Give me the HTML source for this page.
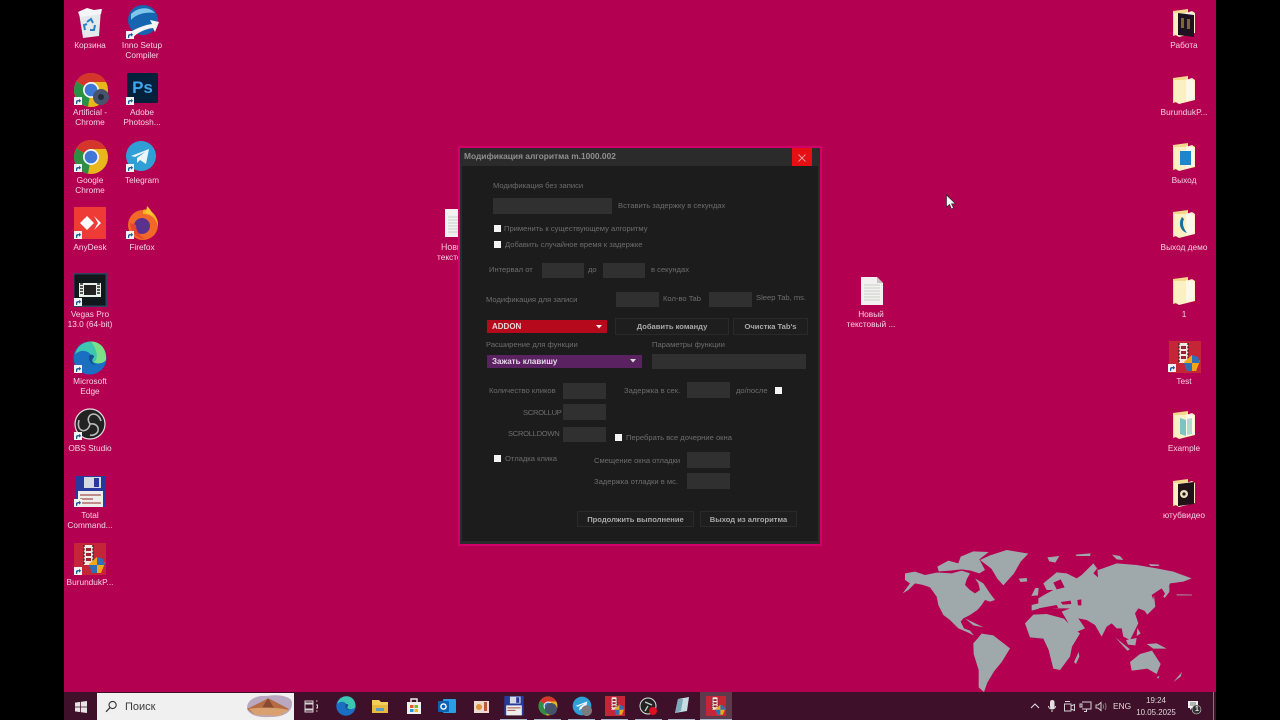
<!DOCTYPE html>
<html lang="ru"><head><meta charset="utf-8"><title>Desktop</title>
<style>
html,body{margin:0;padding:0;width:1280px;height:720px;overflow:hidden;background:#000}
#st{position:absolute;left:0;top:0;width:1280px;height:720px;overflow:hidden;background:#000;font-family:"Liberation Sans","DejaVu Sans",sans-serif;filter:blur(.3px)}
#dk{position:absolute;left:64px;top:0;width:1152px;height:692px;background:#b30050}
.l{position:absolute;width:70px;text-align:center;font-size:8.3px;line-height:10px;color:#f6d3e3;white-space:nowrap}
.i{position:absolute;width:36px;height:36px;overflow:visible}
.a{position:absolute}
.t{position:absolute;font-size:7.6px;line-height:10px;color:#6d6d6d;white-space:nowrap}
.n{position:absolute;background:#303030}
.c{position:absolute;width:7px;height:7px;background:#f4f4f4}
.b{position:absolute;background:#1e1e1e;border:1px solid #2a2a2a;box-sizing:border-box;color:#a9a9a9;font-size:7.6px;font-weight:bold;text-align:center;line-height:15px;white-space:nowrap}
.u{position:absolute;top:718.5px;height:1.5px;background:#a9b8c8}
.ti{position:absolute;top:696px;width:20px;height:20px;overflow:visible}
</style></head><body><div id="st">
<svg width="0" height="0" style="position:absolute"><defs>
<symbol id="s" viewBox="0 0 8 8"><rect width="8" height="8" fill="#f2f2f2"/><path d="M2 7V4.6C2 3.6 3 3 4.4 3H5V1.8L7.2 3.8 5 5.6V4.4H4.4C3.6 4.4 3.2 5 3.2 7Z" fill="#1d5d9a"/></symbol>
<symbol id="ch" viewBox="0 0 36 36"><circle cx="18" cy="18" r="17" fill="#e8b71b"/><path d="M18 18 3.3 9.5A17 17 0 0 1 33 10H18Z" fill="#d5362c"/><path d="M18 18 3.3 9.5A17 17 0 0 0 15 34.7Z" fill="#2c8f45"/><circle cx="18" cy="18" r="8" fill="#f5f5f5"/><circle cx="18" cy="18" r="6.3" fill="#3e77d6"/></symbol>
<symbol id="fo" viewBox="0 0 24 30"><path d="M1 3 16 1V24L1 28Z" fill="#f2d98c"/><path d="M2 5H14L20 3 23 5V25L7 29 2 26Z" fill="#fbf0c4"/><path d="M14 4 22 6V24L14 26Z" fill="#fbf8ea"/></symbol>
<symbol id="bu" viewBox="0 0 32 32"><rect width="32" height="32" fill="#c42638"/><path d="M10 2H19V22H10Z" fill="#f3e7e0"/><path d="M12 5H17V8H12ZM12 10H17V13H12ZM12 15H17V18H12Z" fill="#9a2333"/><path d="M10 2V22M19 2V22" stroke="#40202a" stroke-width="1.4" stroke-dasharray="2 1.4"/><path d="M23 14 31 20 27 30H18L15 21Z" fill="#f0a818"/><path d="M23 14V22H15L18 30H23V22H31L29 16Z" fill="#2e6fb8"/></symbol>
<symbol id="txt" viewBox="0 0 24 30"><path d="M1 1H17L23 7V29H1Z" fill="#f2f0f0"/><path d="M4 9H20M4 12H20M4 15H20M4 18H20M4 21H20M4 24H20" stroke="#c9d0c9" stroke-width="1"/><path d="M17 1V7H23Z" fill="#c9c4c4"/></symbol>
</defs></svg>
<div id="dk"></div>

<svg class="a" style="left:890px;top:540px" width="320" height="152" viewBox="0 0 960 456"><g fill="#9fa9ac">
<path d="M45 100 75 95 105 105 140 98 150 98 185 100 215 92 240 100 230 118 225 135 240 150 255 160 270 150 265 130 255 115 280 130 300 160 315 180 300 185 285 180 275 195 262 210 240 225 220 235 212 245 222 265 240 272 252 287 235 278 205 265 180 240 160 225 145 195 140 170 120 142 100 135 75 130 55 150 38 160 60 130 45 120Z"/>
<path d="M142 80 175 62 205 70 212 50 250 34 296 36 268 58 285 90 268 100 242 92 215 88 180 92 146 94Z"/>
<path d="M270 60 300 46 350 30 415 41 392 65 372 100 340 136 322 116 304 86Z"/>
<path d="M250 310 275 281 310 286 360 325 336 365 312 394 292 428 282 456 266 442 266 390 251 342Z"/>
<path d="M405 250 430 224 470 222 522 236 546 262 570 280 546 320 540 350 510 390 490 386 476 330 460 296 420 292Z"/>
<path d="M425 195 445 190 445 175 462 165 490 150 470 150 460 130 500 97 530 100 560 115 575 105 610 70 625 90 680 70 740 75 800 85 850 95 905 115 880 125 840 130 828 165 815 145 800 155 785 165 795 195 770 215 745 205 735 220 745 250 735 270 720 300 700 290 695 265 680 265 665 250 650 260 635 290 615 255 590 240 565 235 585 265 550 280 530 240 515 215 540 205 480 205 470 205 450 205 425 212Z"/>
<path d="M720 366 750 342 786 332 812 372 800 402 772 386 725 392Z"/>
<path d="M552 366 566 336 568 350 558 372Z"/>
<path d="M386 116 410 114 412 124 392 126Z"/><path d="M472 52 508 48 496 68 478 64Z"/><path d="M556 44 602 40 600 48 560 48Z"/><path d="M666 44 690 48 700 60 680 58Z"/><path d="M776 72 808 74 806 78 782 78Z"/>
<path d="M436 144 446 144 444 166 424 168Z"/><path d="M820 170 838 138 838 156 824 174Z"/><path d="M762 210 786 196 792 166 796 200 772 224Z"/>
<path d="M676 292 720 328 712 332Z"/><path d="M708 300 740 294 736 316 714 314Z"/><path d="M770 312 800 310 830 326 790 326Z"/><path d="M742 264 752 280 740 288Z"/><path d="M850 426 876 396 872 410Z"/><path d="M800 412 808 408 806 416Z"/>
<path d="M225 235 256 250 280 262 250 256Z"/><path d="M860 163 906 164 906 166 860 166Z"/></g>
<g fill="#b30050"><path d="M512 186 542 182 544 192 518 194Z"/><path d="M490 128 512 118 524 142 500 148Z"/><path d="M562 180 574 178 574 196 564 196Z"/><path d="M610 100 622 84 624 112Z"/><path d="M445 205 500 195 505 204 450 208Z"/></g></svg>

<!-- left icons -->
<svg class="i" style="left:72px;top:5px" viewBox="0 0 36 36"><path d="M7 8 29 4 27 31 11 33Z" fill="#e4e9ec"/><path d="M6 7 15 3 22 5 30 4 29 9 8 12Z" fill="#f6f6f6"/><path d="M15 17 19 14 21 18M23 20 22 25 18 25M13 25 12 20 15 19" stroke="#2a80c4" stroke-width="2" fill="none"/></svg>
<div class="l" style="left:55px;top:40px">Корзина</div>
<svg class="i" style="left:124px;top:5px" viewBox="0 0 36 36"><circle cx="19" cy="15" r="15" fill="#1565b0"/><path d="M7 9C14 2 25 1 31 8 24 7 13 8 7 15Z" fill="#7fc6ea"/><path d="M2 30C10 24 20 20 28 19L26 15 35 17 31 27 29 23C20 24 11 29 8 34Z" fill="#f5f5f5"/></svg>
<svg class="a" style="left:126px;top:31px" width="8" height="8"><use href="#s"/></svg>
<div class="l" style="left:107px;top:40px">Inno Setup<br>Compiler</div>

<svg class="i" style="left:73px;top:72px"><use href="#ch"/></svg><svg class="a" style="left:92px;top:88px" width="18" height="18" viewBox="0 0 18 18"><circle cx="9" cy="9" r="8" fill="#46536a"/><circle cx="9" cy="9" r="3" fill="#222b3d"/></svg>
<svg class="a" style="left:74px;top:97px" width="8" height="8"><use href="#s"/></svg>
<div class="l" style="left:55px;top:107px">Artificial -<br>Chrome</div>
<div class="a" style="left:127px;top:73px;width:31px;height:30px;background:#04203a;border-radius:2px;color:#3fa6f0;font:bold 17px/30px 'Liberation Sans',sans-serif;text-align:center">Ps</div>
<svg class="a" style="left:126px;top:97px" width="8" height="8"><use href="#s"/></svg>
<div class="l" style="left:107px;top:107px">Adobe<br>Photosh...</div>

<svg class="i" style="left:73px;top:139px"><use href="#ch"/></svg>
<svg class="a" style="left:74px;top:164px" width="8" height="8"><use href="#s"/></svg>
<div class="l" style="left:55px;top:175px">Google<br>Chrome</div>
<svg class="i" style="left:126px;top:141px;width:30px;height:30px" viewBox="0 0 30 30"><circle cx="15" cy="15" r="15" fill="#2f9fd6"/><path d="M5 15 23 8 20 23 14 19 11 22 11 17 19 11 9 16Z" fill="#eef5f9"/></svg>
<svg class="a" style="left:126px;top:164px" width="8" height="8"><use href="#s"/></svg>
<div class="l" style="left:107px;top:175px">Telegram</div>

<svg class="a" style="left:74px;top:207px" width="32" height="32" viewBox="0 0 32 32"><rect width="32" height="32" fill="#ef3b36"/><path d="M13 9 20 16 13 23 6 16ZM20 9 27 16 20 23 24 16Z" fill="#fff"/></svg>
<svg class="a" style="left:74px;top:231px" width="8" height="8"><use href="#s"/></svg>
<div class="l" style="left:55px;top:242px">AnyDesk</div>
<svg class="a" style="left:127px;top:206px" width="32" height="34" viewBox="0 0 32 34"><circle cx="16" cy="19" r="15" fill="#f2682a"/><path d="M16 4C24 1 32 12 31 20 28 10 22 8 16 8Z" fill="#f6b025"/><path d="M20 0C24 4 25 6 26 10L19 7Z" fill="#fbc531"/><circle cx="15" cy="20" r="8" fill="#5b3190"/><path d="M3 17C4 26 10 33 18 33 12 29 9 25 9 19Z" fill="#e8452f"/></svg>
<svg class="a" style="left:126px;top:231px" width="8" height="8"><use href="#s"/></svg>
<div class="l" style="left:107px;top:242px">Firefox</div>

<svg class="a" style="left:73px;top:273px" width="34" height="34" viewBox="0 0 34 34"><rect width="34" height="34" fill="#2f4262"/><rect x="1.5" y="1.5" width="31" height="31" fill="#11181c"/><path d="M6 10H28V24H6Z" fill="#e8eee8"/><path d="M11 12H23V22H11Z" fill="#222"/><path d="M7 11H10M7 14H10M7 17H10M7 20H10M24 11H27M24 14H27M24 17H27M24 20H27" stroke="#222" stroke-width="1.4"/></svg>
<svg class="a" style="left:74px;top:298px" width="8" height="8"><use href="#s"/></svg>
<div class="l" style="left:55px;top:309px">Vegas Pro<br>13.0 (64-bit)</div>
<svg class="a" style="left:73px;top:341px" width="34" height="34" viewBox="0 0 34 34"><circle cx="17" cy="17" r="16.5" fill="#1b6fc2"/><path d="M2 14C4 4 12 .5 18 .5 28 .5 34 9 33 19 30 23 20 24 18 19 20 12 13 9 8 10 5 11 3 12 2 14Z" fill="#3dc7b0"/><path d="M18 .5C28 .5 34 9 33 19 30 23 24 23 21 21 26 18 24 8 18 .5Z" fill="#7be087"/><path d="M16 15C17 13 21 13 21 16 18 19 19 22 23 24 19 24 15 20 16 15Z" fill="#14508f"/></svg>
<svg class="a" style="left:74px;top:365px" width="8" height="8"><use href="#s"/></svg>
<div class="l" style="left:55px;top:376px">Microsoft<br>Edge</div>
<svg class="a" style="left:74px;top:408px" width="32" height="32" viewBox="0 0 32 32"><circle cx="16" cy="16" r="15" fill="#222" stroke="#e8e0e4" stroke-width="1.2"/><path d="M16 16C13 12 14 7 19 6 23 6 26 9 27 13M16 16C21 15 25 18 24 23 23 26 19 28 16 27M16 16C15 21 11 24 7 22 4 20 4 16 5 12" fill="none" stroke="#b9b9b9" stroke-width="1.6"/></svg>
<svg class="a" style="left:74px;top:432px" width="8" height="8"><use href="#s"/></svg>
<div class="l" style="left:55px;top:443px">OBS Studio</div>
<svg class="a" style="left:75px;top:476px" width="31" height="32" viewBox="0 0 31 32"><path d="M0 0H31V31H0Z" fill="#28399e"/><rect x="9" y="1" width="17" height="11" fill="#d5dae0"/><rect x="19" y="2" width="5" height="9" fill="#28399e"/><rect x="3" y="15" width="25" height="16" fill="#f0eeea"/><path d="M5 19H26M5 23H18M5 27H26" stroke="#a25252" stroke-width="1.2"/></svg>
<svg class="a" style="left:74px;top:499px" width="8" height="8"><use href="#s"/></svg>
<div class="l" style="left:55px;top:510px">Total<br>Command...</div>
<svg class="a" style="left:74px;top:543px" width="32" height="32"><use href="#bu"/></svg>
<svg class="a" style="left:74px;top:567px" width="8" height="8"><use href="#s"/></svg>
<div class="l" style="left:55px;top:577px">BurundukP...</div>

<!-- right icons -->
<svg class="a" style="left:1172px;top:8px" width="24" height="30" viewBox="0 0 24 30"><use href="#fo"/><path d="M6 5 22 7V29L6 27Z" fill="#1f1220"/><path d="M9 10H12V20H9ZM15 11H18V21H15Z" fill="#7b6a30"/></svg>
<div class="l" style="left:1149px;top:40px">Работа</div>
<svg class="a" style="left:1172px;top:75px" width="24" height="30"><use href="#fo"/></svg>
<div class="l" style="left:1149px;top:107px">BurundukP...</div>
<svg class="a" style="left:1172px;top:142px" width="24" height="30" viewBox="0 0 24 30"><use href="#fo"/><path d="M8 9H19V23H8Z" fill="#1f86cc"/></svg>
<div class="l" style="left:1149px;top:175px">Выход</div>
<svg class="a" style="left:1172px;top:209px" width="24" height="30" viewBox="0 0 24 30"><use href="#fo"/><path d="M10 8C6 14 8 22 15 24 11 19 10 14 12 10Z" fill="#1a6f9e"/></svg>
<div class="l" style="left:1149px;top:242px">Выход демо</div>
<svg class="a" style="left:1172px;top:276px" width="24" height="30"><use href="#fo"/></svg>
<div class="l" style="left:1149px;top:309px">1</div>
<svg class="a" style="left:1169px;top:341px" width="32" height="32"><use href="#bu"/></svg>
<svg class="a" style="left:1168px;top:364px" width="8" height="8"><use href="#s"/></svg>
<div class="l" style="left:1149px;top:376px">Test</div>
<svg class="a" style="left:1172px;top:410px" width="24" height="30" viewBox="0 0 24 30"><use href="#fo"/><path d="M8 8 14 10V26L8 24Z" fill="#7cc4c4"/><path d="M15 9 20 8V24L15 25Z" fill="#b6d8cf"/></svg>
<div class="l" style="left:1149px;top:443px">Example</div>
<svg class="a" style="left:1172px;top:478px" width="24" height="30" viewBox="0 0 24 30"><use href="#fo"/><path d="M6 6 22 4V26L6 28Z" fill="#201218"/><circle cx="12" cy="16" r="4" fill="#e8e0c0"/><circle cx="12" cy="16" r="1.6" fill="#201218"/></svg>
<div class="l" style="left:1149px;top:510px">ютубвидео</div>

<!-- middle icons -->
<svg class="a" style="left:444px;top:208px" width="24" height="30"><use href="#txt"/></svg>
<div class="a" style="left:441px;top:242px;font-size:8.8px;line-height:10px;color:#f6c4da">Новый</div>
<div class="a" style="left:437px;top:252px;font-size:8.3px;line-height:10px;color:#f6d3e3;white-space:nowrap">текстовый ...</div>
<svg class="a" style="left:860px;top:276px" width="24" height="30"><use href="#txt"/></svg>
<div class="l" style="left:836px;top:309px">Новый<br>текстовый ...</div>

<!-- cursor -->
<svg class="a" style="left:945px;top:194px" width="12" height="16" viewBox="0 0 12 16"><path d="M1.5 1V13L4.5 10.5 6.5 15 8.5 14 6.5 9.8H10.5Z" fill="#f6f6f6" stroke="#222" stroke-width=".6"/></svg>

<!-- dialog -->
<div class="a" style="left:458px;top:146px;width:364px;height:400px;background:#d4006a"></div>
<div class="a" style="left:460px;top:148px;width:360px;height:396px;background:#2b2b2b"></div>
<div class="a" style="left:462px;top:166px;width:356px;height:375px;background:#1c1c1c"></div>
<div class="t" style="left:464px;top:150.5px;color:#8f8f8f;font-weight:bold;font-size:8.4px">Модификация алгоритма m.1000.002</div>
<div class="a" style="left:792px;top:148px;width:20px;height:18px;background:#e60f14"></div>
<svg class="a" style="left:798px;top:154px" width="8" height="8"><path d="M.5.5 7.5 7.5M7.5.5.5 7.5" stroke="#f0a0a0" stroke-width=".9"/></svg>

<div class="t" style="left:493px;top:181px">Модификация без записи</div>
<div class="n" style="left:493px;top:198px;width:119px;height:16px"></div>
<div class="t" style="left:618px;top:201px">Вставить задержку в секундах</div>
<div class="c" style="left:494px;top:225px"></div>
<div class="t" style="left:504px;top:224px">Применить к существующему алгоритму</div>
<div class="c" style="left:494px;top:241px"></div>
<div class="t" style="left:505px;top:239.5px">Добавить случайное время к задержке</div>
<div class="t" style="left:489px;top:265px">Интервал от</div>
<div class="n" style="left:542px;top:263px;width:42px;height:15px"></div>
<div class="t" style="left:588px;top:265px">до</div>
<div class="n" style="left:603px;top:263px;width:42px;height:15px"></div>
<div class="t" style="left:651px;top:265px">в секундах</div>
<div class="t" style="left:486px;top:295px">Модификация для записи</div>
<div class="n" style="left:616px;top:292px;width:43px;height:15px"></div>
<div class="t" style="left:663px;top:294px">Кол-во Tab</div>
<div class="n" style="left:709px;top:292px;width:43px;height:15px"></div>
<div class="t" style="left:756px;top:293px">Sleep Tab, ms.</div>

<div class="a" style="left:487px;top:320px;width:120px;height:13px;background:#b60a1c;color:#e8d4d4;font:bold 8px/13px 'Liberation Sans',sans-serif;text-indent:5px">ADDON</div>
<svg class="a" style="left:596px;top:325px" width="6" height="4"><path d="M0 0H6L3 3.5Z" fill="#eee"/></svg>
<div class="b" style="left:615px;top:318px;width:114px;height:17px">Добавить команду</div>
<div class="b" style="left:733px;top:318px;width:75px;height:17px">Очистка Tab's</div>

<div class="t" style="left:486px;top:339.5px">Расширение для функции</div>
<div class="t" style="left:652px;top:339.5px">Параметры функции</div>
<div class="a" style="left:487px;top:355px;width:155px;height:13px;background:#5a2260;color:#e4dbe6;font:bold 8px/13px 'Liberation Sans',sans-serif;text-indent:5px">Зажать клавишу</div>
<svg class="a" style="left:630px;top:359px" width="6" height="4"><path d="M0 0H6L3 3.5Z" fill="#ddd"/></svg>
<div class="n" style="left:652px;top:354px;width:154px;height:15px"></div>

<div class="t" style="left:489px;top:385.5px">Количество кликов</div>
<div class="n" style="left:563px;top:383px;width:43px;height:16px"></div>
<div class="t" style="left:624px;top:385.5px">Задержка в сек.</div>
<div class="n" style="left:687px;top:382px;width:43px;height:16px"></div>
<div class="t" style="left:736px;top:385.5px">до/после</div>
<div class="c" style="left:775px;top:387px"></div>
<div class="t" style="left:523px;top:407.5px;letter-spacing:-.3px">SCROLLUP</div>
<div class="n" style="left:563px;top:404px;width:43px;height:16px"></div>
<div class="t" style="left:508px;top:429px;letter-spacing:-.3px">SCROLLDOWN</div>
<div class="n" style="left:563px;top:427px;width:43px;height:15px"></div>
<div class="c" style="left:615px;top:434px"></div>
<div class="t" style="left:626px;top:432.5px">Перебрать все дочерние окна</div>
<div class="c" style="left:494px;top:455px"></div>
<div class="t" style="left:505px;top:454px">Отладка клика</div>
<div class="t" style="left:594px;top:455.5px">Смещение окна отладки</div>
<div class="n" style="left:687px;top:452px;width:43px;height:16px"></div>
<div class="t" style="left:594px;top:476.5px">Задержка отладки в мс.</div>
<div class="n" style="left:687px;top:473px;width:43px;height:16px"></div>
<div class="b" style="left:577px;top:511px;width:117px;height:16px">Продолжить выполнение</div>
<div class="b" style="left:700px;top:511px;width:97px;height:16px">Выход из алгоритма</div>

<!-- taskbar -->
<div class="a" style="left:64px;top:692px;width:1152px;height:28px;background:#3f1029"></div>
<svg class="a" style="left:75px;top:701px" width="12" height="12" viewBox="0 0 12 12"><path d="M0 1.6 5.2.9V5.6H0ZM6 .8 12 0V5.6H6ZM0 6.4H5.2V11.1L0 10.4ZM6 6.4H12V12L6 11.2Z" fill="#e8e4e6"/></svg>
<div class="a" style="left:97px;top:693px;width:197px;height:27px;background:#f0f0f0"></div>
<svg class="a" style="left:105px;top:700px" width="13" height="13" viewBox="0 0 13 13"><circle cx="7.6" cy="5" r="3.6" fill="none" stroke="#333" stroke-width="1.1"/><path d="M5 7.6 1 11.8" stroke="#333" stroke-width="1.2"/></svg>
<div class="a" style="left:125px;top:701px;font-size:11px;line-height:13px;color:#3a3a3a">Поиск</div>
<svg class="a" style="left:243px;top:693px" width="50" height="26" viewBox="0 0 50 26"><path d="M4 14C5 6 14 2 24 3 34 1 48 3 49 9 50 18 42 24 28 24 16 25 4 22 4 14Z" fill="#b9a8bf"/><path d="M4 16 24 6 27 6 46 16 38 22 12 22Z" fill="#b56c45"/><path d="M25 5 19 15H31Z" fill="#8a4a32"/><path d="M6 16C16 14 34 14 46 17L36 23 12 22Z" fill="#d9a16f"/></svg>

<svg class="ti" style="left:301px" viewBox="0 0 20 20"><path d="M4 5H12V7H4ZM4 8H12V13H4ZM4 14H12V16H4Z" fill="none" stroke="#d8d4d6" stroke-width="1"/><path d="M15 5H16.5M15 9H16.5V12H15M15 15H16.5" stroke="#d8d4d6" stroke-width="1" fill="none"/></svg>
<svg class="ti" style="left:336px" viewBox="0 0 34 34"><circle cx="17" cy="17" r="16.5" fill="#1b6fc2"/><path d="M2 14C4 4 12 .5 18 .5 28 .5 34 9 33 19 30 23 20 24 18 19 20 12 13 9 8 10 5 11 3 12 2 14Z" fill="#3dc7b0"/><path d="M16 15C17 13 21 13 21 16 18 19 19 22 23 24 19 24 15 20 16 15Z" fill="#14508f"/></svg>
<svg class="ti" style="left:370px" viewBox="0 0 20 20"><path d="M2 4H9L11 6H18V17H2Z" fill="#f3cf5a"/><rect x="2" y="9" width="16" height="8" fill="#e8b93c"/><rect x="6" y="12" width="8" height="3" fill="#5aa0c8"/></svg>
<svg class="ti" style="left:404px" viewBox="0 0 20 20"><path d="M3 6H17V18H3Z" fill="#f0f0ee"/><path d="M7 6V3H13V6" fill="none" stroke="#f0f0ee" stroke-width="1.4"/><rect x="6" y="9" width="3.5" height="3" fill="#e8562a"/><rect x="10.5" y="9" width="3.5" height="3" fill="#7cb82c"/><rect x="6" y="13" width="3.5" height="3" fill="#1f9be0"/><rect x="10.5" y="13" width="3.5" height="3" fill="#f5b81d"/></svg>
<svg class="ti" style="left:437px" viewBox="0 0 20 20"><rect x="6" y="3" width="13" height="14" rx="1" fill="#2a9fe6"/><rect x="1" y="5" width="11" height="11" rx="1" fill="#0f5fb2"/><circle cx="6.5" cy="10.5" r="2.6" fill="none" stroke="#fff" stroke-width="1.4"/></svg>
<svg class="ti" style="left:471px" viewBox="0 0 20 20"><rect x="3" y="5" width="15" height="12" fill="#eadccc"/><circle cx="8" cy="11" r="3" fill="#e0913a"/><rect x="13" y="6" width="3" height="9" fill="#c0563a"/></svg>
<svg class="ti" style="left:504px" viewBox="0 0 31 32"><path d="M0 0H31V31H0Z" fill="#28399e"/><rect x="9" y="1" width="17" height="11" fill="#d5dae0"/><rect x="19" y="2" width="5" height="9" fill="#28399e"/><rect x="3" y="15" width="25" height="16" fill="#f0eeea"/><path d="M5 19H26M5 23H18" stroke="#a25252" stroke-width="1.5"/></svg>
<svg class="ti" style="left:538px"><use href="#ch" width="20" height="20"/><circle cx="13" cy="13" r="6" fill="#46536a"/></svg>
<svg class="ti" style="left:572px" viewBox="0 0 30 30"><circle cx="15" cy="15" r="14" fill="#2f9fd6"/><path d="M5 15 23 8 20 23 14 19 11 22 11 17 19 11 9 16Z" fill="#eef5f9"/><circle cx="22" cy="22" r="8" fill="#7b7b80"/></svg>
<svg class="ti" style="left:605px"><use href="#bu" width="20" height="20"/></svg>
<svg class="ti" style="left:639px" viewBox="0 0 20 20"><circle cx="9" cy="10" r="8" fill="#222" stroke="#ddd" stroke-width="1"/><path d="M6 6 13 9M9 10 6 15" stroke="#ccc" stroke-width="1.3"/><circle cx="14" cy="15" r="4" fill="#e01020"/></svg>
<svg class="ti" style="left:672px" viewBox="0 0 20 20"><path d="M6 3 17 1 15 15 3 17Z" fill="#c5dde0"/><path d="M6 3 3 17 9 15 11 3Z" fill="#7fa9b8"/></svg>
<div class="a" style="left:700px;top:692px;width:32px;height:28px;background:#5d3a4c"></div>
<svg class="ti" style="left:706px"><use href="#bu" width="20" height="20"/></svg>
<div class="u" style="left:500px;width:27px"></div><div class="u" style="left:534px;width:27px"></div><div class="u" style="left:568px;width:27px"></div><div class="u" style="left:601px;width:27px"></div><div class="u" style="left:635px;width:27px"></div><div class="u" style="left:668px;width:27px"></div><div class="u" style="left:700px;width:32px"></div>

<svg class="a" style="left:1030px;top:702px" width="10" height="7"><path d="M1 6 5 2 9 6" fill="none" stroke="#e0dcde" stroke-width="1.1"/></svg>
<svg class="a" style="left:1047px;top:699px" width="10" height="15" viewBox="0 0 10 15"><rect x="3" y="1" width="4.5" height="9" rx="2.2" fill="#e4e0e2"/><path d="M1.5 7C1.5 11 8.5 11 8.5 7M5 11V13" stroke="#e4e0e2" fill="none"/></svg>
<svg class="a" style="left:1063px;top:700px" width="13" height="13" viewBox="0 0 13 13"><path d="M2 1.5H7M1.5 4H8V11H1.5ZM8 6 11.5 4.5V10.5L8 9" fill="none" stroke="#d4d0d2"/></svg>
<svg class="a" style="left:1079px;top:701px" width="13" height="12" viewBox="0 0 13 12"><path d="M3 1H12V8H3M7.5 8V10.5H5M1 3H3V6H1Z" fill="none" stroke="#d8d4d6"/></svg>
<svg class="a" style="left:1095px;top:701px" width="12" height="11" viewBox="0 0 12 11"><path d="M1 4H3L6 1.5V9.5L3 7H1Z" fill="none" stroke="#cfcbcd"/><path d="M8 3.5C9 5 9 6 8 7.5M10 2C11.4 4 11.4 7 10 9" fill="none" stroke="#8a7a82"/></svg>
<div class="a" style="left:1113px;top:701px;font-size:8.4px;line-height:10px;color:#dcd8da">ENG</div>
<div class="a" style="left:1136px;top:694.5px;width:40px;text-align:center;font-size:7.9px;line-height:12px;color:#dcd8da;white-space:nowrap">19:24<br>10.05.2025</div>
<svg class="a" style="left:1187px;top:700px" width="15" height="15" viewBox="0 0 15 15"><path d="M1 1H11V8H5L3 10V8H1Z" fill="#eee"/><path d="M3 3H9M3 5H9" stroke="#555" stroke-width=".7"/><circle cx="9.5" cy="9.5" r="4.5" fill="#333" stroke="#ccc" stroke-width=".6"/></svg>
<div class="a" style="left:1195px;top:704.5px;font-size:7px;line-height:9px;color:#eee;font-weight:bold">1</div>
<div class="a" style="left:1213px;top:692px;width:1px;height:28px;background:#8a7480"></div>
</div></body></html>
